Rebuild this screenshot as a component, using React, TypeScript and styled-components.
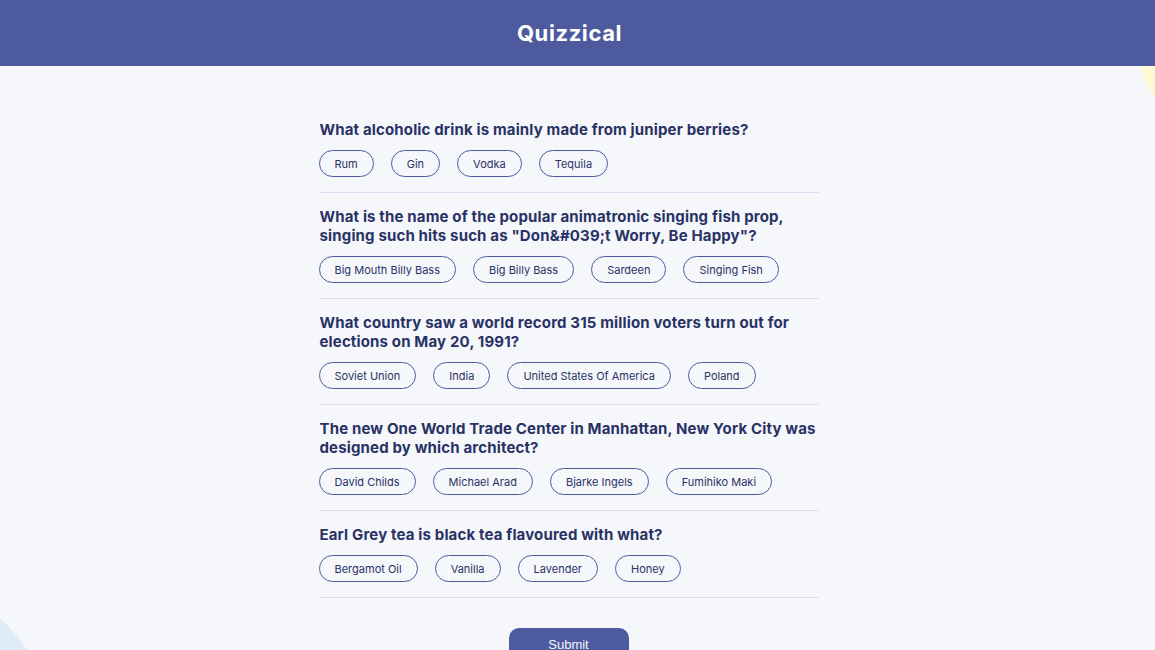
import React from "react";
import styled, { createGlobalStyle } from "styled-components";

const Global = createGlobalStyle`
  html, body { margin: 0; padding: 0; }
  body {
    background: #F5F7FB;
    font-family: "Inter", "Noto Sans", sans-serif;
    color: #293264;
    overflow: hidden;
  }
`;

const Page = styled.div`
  position: relative;
  width: 100%;
  height: 650px;
  overflow: hidden;
  background: #F5F7FB;
`;

const BlobYellow = styled.div`
  position: absolute;
  top: -60px;
  right: -182px;
  width: 200px;
  height: 200px;
  border-radius: 50%;
  background: #FFFAD1;
`;

const BlobBlue = styled.div`
  position: absolute;
  top: 580px;
  left: -250px;
  width: 300px;
  height: 300px;
  border-radius: 50%;
  background: #DEEBF8;
`;

const Header = styled.header`
  position: relative;
  z-index: 1;
  height: 66px;
  background: #4D5B9E;
  display: flex;
  align-items: center;
  justify-content: center;
  padding-right: 16px;
`;

const Title = styled.h1`
  margin: 0;
  color: #ffffff;
  font-family: "Inter", sans-serif;
  font-size: 22px;
  font-weight: 700;
  letter-spacing: 0.6px;
`;

const Main = styled.main`
  position: relative;
  z-index: 1;
  display: flex;
  flex-direction: column;
  align-items: center;
  padding-top: 40px;
  padding-right: 18px;
`;

const List = styled.div`
  width: 500px;
  display: flex;
  flex-direction: column;
`;

const Section = styled.section`
  padding: 14px 0 15px;
  border-bottom: 1px solid #DBDEF0;
`;

const Question = styled.h2`
  margin: 0 0 11px;
  padding-left: 1px;
  font-family: "Inter", sans-serif;
  font-size: 15px;
  line-height: 19px;
  font-weight: 700;
  color: #293264;
  letter-spacing: 0.15px;
`;

const Answers = styled.div`
  display: flex;
  gap: 17px;
`;

const Answer = styled.button`
  height: 27px;
  padding: 0 15px;
  border: 1px solid #4D5B9E;
  border-radius: 14px;
  background: transparent;
  color: #293264;
  font-family: "Inter", sans-serif;
  font-size: 11px;
  font-weight: 400;
  cursor: pointer;
`;

const Submit = styled.button`
  margin-top: 30px;
  width: 120px;
  height: 32px;
  border: none;
  border-radius: 10px;
  background: #4D5B9E;
  color: #F5F7FB;
  font-family: "Liberation Sans", Arial, sans-serif;
  font-size: 13px;
  cursor: pointer;
`;

const data = [
  {
    q: "What alcoholic drink is mainly made from juniper berries?",
    a: ["Rum", "Gin", "Vodka", "Tequila"],
  },
  {
    q: 'What is the name of the popular animatronic singing fish prop, singing such hits such as "Don&#039;t Worry, Be Happy"?',
    a: ["Big Mouth Billy Bass", "Big Billy Bass", "Sardeen", "Singing Fish"],
  },
  {
    q: "What country saw a world record 315 million voters turn out for elections on May 20, 1991?",
    a: ["Soviet Union", "India", "United States Of America", "Poland"],
  },
  {
    q: "The new One World Trade Center in Manhattan, New York City was designed by which architect?",
    a: ["David Childs", "Michael Arad", "Bjarke Ingels", "Fumihiko Maki"],
  },
  {
    q: "Earl Grey tea is black tea flavoured with what?",
    a: ["Bergamot Oil", "Vanilla", "Lavender", "Honey"],
  },
];

export default function App() {
  return (
    <Page>
      <Global />
      <BlobYellow />
      <BlobBlue />
      <Header>
        <Title>Quizzical</Title>
      </Header>
      <Main>
        <List>
          {data.map((item) => (
            <Section key={item.q}>
              <Question>{item.q}</Question>
              <Answers>
                {item.a.map((ans) => (
                  <Answer key={ans}>{ans}</Answer>
                ))}
              </Answers>
            </Section>
          ))}
        </List>
        <Submit>Submit</Submit>
      </Main>
    </Page>
  );
}
